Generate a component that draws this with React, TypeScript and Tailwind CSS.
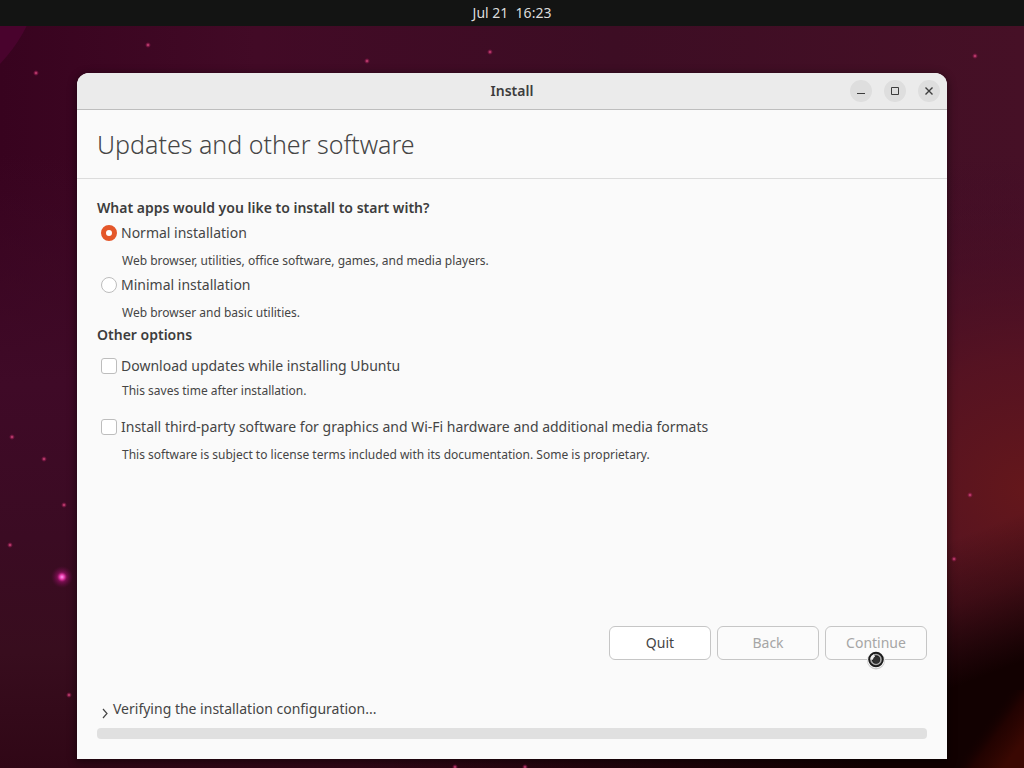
import { useState } from 'react';
import type { ReactNode } from 'react';

type IChoiceProps = {
  type: 'radio' | 'checkbox';
  id: string;
  name: string;
  label: string;
  hint: string;
  hintClassName: string;
  checked: boolean;
  onChange: () => void;
};

type IWindowButtonProps = {
  label: string;
  children: ReactNode;
};

type IActionButtonProps = {
  disabled?: boolean;
  children: string;
};

const stars = [
  { x: 36, y: 73 },
  { x: 148, y: 45 },
  { x: 367, y: 61 },
  { x: 490, y: 52 },
  { x: 975, y: 56 },
  { x: 12, y: 437 },
  { x: 44, y: 459 },
  { x: 64, y: 505 },
  { x: 10, y: 545 },
  { x: 69, y: 695 },
  { x: 970, y: 495 },
  { x: 954, y: 559 },
  { x: 455, y: 767 },
  { x: 525, y: 767 },
];

const Wallpaper = () => (
  <svg
    className="absolute inset-0 h-full w-full"
    viewBox="0 0 1024 768"
    preserveAspectRatio="xMidYMid slice"
    aria-hidden="true"
  >
    <defs>
      <linearGradient id="base" x1="0" y1="0" x2="1" y2="0">
        <stop offset="0" stopColor="#38031f" />
        <stop offset="0.25" stopColor="#420a26" />
        <stop offset="0.6" stopColor="#3d0d24" />
        <stop offset="1" stopColor="#461026" />
      </linearGradient>
      <linearGradient id="lower" x1="0" y1="0" x2="0" y2="1">
        <stop offset="0.2" stopColor="#3f0a27" stopOpacity="0" />
        <stop offset="0.5" stopColor="#3f0a27" />
        <stop offset="0.7" stopColor="#3b0b23" />
        <stop offset="0.85" stopColor="#380d1e" />
        <stop offset="1" stopColor="#300716" />
      </linearGradient>
      <radialGradient
        id="ember"
        gradientUnits="userSpaceOnUse"
        cx="1024"
        cy="490"
        r="330"
      >
        <stop offset="0" stopColor="#64171b" />
        <stop offset="0.4" stopColor="#591421" stopOpacity="0.85" />
        <stop offset="1" stopColor="#461026" stopOpacity="0" />
      </radialGradient>
      <linearGradient
        id="shade"
        gradientUnits="userSpaceOnUse"
        x1="950"
        y1="540"
        x2="1000"
        y2="670"
      >
        <stop offset="0" stopColor="#120101" stopOpacity="0" />
        <stop offset="0.45" stopColor="#120101" stopOpacity="0.35" />
        <stop offset="1" stopColor="#120101" />
      </linearGradient>
      <linearGradient id="floor" x1="0" y1="0" x2="1" y2="0">
        <stop offset="0.35" stopColor="#120101" stopOpacity="0" />
        <stop offset="0.85" stopColor="#120101" />
      </linearGradient>
      <linearGradient
        id="corner"
        gradientUnits="userSpaceOnUse"
        x1="990"
        y1="715"
        x2="1024"
        y2="740"
      >
        <stop offset="0" stopColor="#120101" stopOpacity="0" />
        <stop offset="0.4" stopColor="#260301" stopOpacity="0.8" />
        <stop offset="1" stopColor="#3a0802" />
      </linearGradient>
      <radialGradient id="star">
        <stop offset="0" stopColor="#f06a9c" />
        <stop offset="0.35" stopColor="#b82c62" stopOpacity="0.75" />
        <stop offset="1" stopColor="#8a1050" stopOpacity="0" />
      </radialGradient>
      <radialGradient id="nova">
        <stop offset="0" stopColor="#ff9af2" />
        <stop offset="0.22" stopColor="#e53aa8" />
        <stop offset="0.45" stopColor="#a0106c" stopOpacity="0.6" />
        <stop offset="1" stopColor="#6a0a48" stopOpacity="0" />
      </radialGradient>
    </defs>
    <rect width="1024" height="768" fill="url(#base)" />
    <rect width="1024" height="768" fill="url(#lower)" />
    <rect x="600" y="100" width="424" height="668" fill="url(#ember)" />
    <path d="M0 0h36Q28 34 0 64z" fill="#49032d" />
    <rect x="900" y="500" width="124" height="268" fill="url(#shade)" />
    <rect y="755" width="1024" height="13" fill="url(#floor)" />
    <rect x="960" y="690" width="64" height="78" fill="url(#corner)" />
    {stars.map((star) => (
      <circle
        key={`${star.x}-${star.y}`}
        cx={star.x}
        cy={star.y}
        r="3"
        fill="url(#star)"
      />
    ))}
    <circle cx="62" cy="577" r="11" fill="url(#nova)" />
  </svg>
);

const WindowButton = (props: IWindowButtonProps) => (
  <button
    type="button"
    aria-label={props.label}
    className="flex h-[22px] w-[22px] items-center justify-center rounded-full bg-[#dedede]"
  >
    <svg
      className="h-4 w-4"
      viewBox="0 0 16 16"
      fill="none"
      stroke="#3d3d3d"
      aria-hidden="true"
    >
      {props.children}
    </svg>
  </button>
);

const Choice = (props: IChoiceProps) => (
  <div>
    <div className="flex h-5 items-center gap-1 pl-1">
      <input
        type={props.type}
        id={props.id}
        name={props.name}
        checked={props.checked}
        onChange={props.onChange}
        aria-describedby={`${props.id}-hint`}
        className={
          props.type === 'radio'
            ? 'h-4 w-4 shrink-0 appearance-none rounded-full border border-[#bdbdbd] bg-white checked:border-[5px] checked:border-[#e4572a]'
            : 'h-4 w-4 shrink-0 appearance-none rounded-[3px] border border-[#bdbdbd] bg-white checked:border-[#e4572a] checked:bg-[#e4572a]'
        }
      />
      <label htmlFor={props.id} className="text-sm leading-5">
        {props.label}
      </label>
    </div>
    <p
      id={`${props.id}-hint`}
      className={`${props.hintClassName} pl-[25px] text-xs leading-5`}
    >
      {props.hint}
    </p>
  </div>
);

const ActionButton = (props: IActionButtonProps) => (
  <button
    type="button"
    disabled={props.disabled}
    className="h-[34px] w-[102px] rounded-md border border-[#c6c6c6] bg-white text-sm disabled:bg-[#fbfbfb] disabled:text-[#a6a6a6]"
  >
    {props.children}
  </button>
);

const BusyCursor = () => (
  <svg
    className="pointer-events-none absolute top-6 left-[41px] h-5 w-5"
    viewBox="0 0 20 20"
    aria-hidden="true"
  >
    <circle cx="10" cy="10.5" r="9" fill="#b9b9b9" opacity="0.7" />
    <circle cx="10" cy="9.5" r="8.6" fill="#fff" />
    <circle cx="10" cy="9.5" r="7.8" fill="#1c1c1c" />
    <circle cx="10" cy="9.5" r="5" fill="none" stroke="#a8a8a8" strokeWidth="1.6" />
    <path d="M4.4 9.5a5.6 5.6 0 0 1 3.4-5.2l1.4 2.6-2.4 2.8z" fill="#efefef" />
    <circle cx="10.5" cy="9.8" r="3.4" fill="#303030" />
  </svg>
);

const App = () => {
  const [mode, setMode] = useState('normal');
  const [updates, setUpdates] = useState(false);
  const [thirdParty, setThirdParty] = useState(false);
  const [expanded, setExpanded] = useState(false);

  return (
    <div className="relative flex min-h-screen flex-col overflow-hidden bg-[#3a0c23] font-['Noto_Sans','Open_Sans',sans-serif] text-[#454545]">
      <Wallpaper />

      <header className="relative flex h-[26px] items-center justify-center bg-[#131413] text-sm leading-5 text-[#dcdcdc]">
        <time className="whitespace-pre">{'Jul 21  16:23'}</time>
      </header>

      <main className="relative flex flex-1 flex-col px-[77px] pt-[47px] pb-[9px]">
        <section className="flex flex-1 flex-col rounded-t-xl bg-[#fafafa] shadow-[0_2px_8px_1px_rgba(0,0,0,0.45)]">
          <div className="grid h-[37px] grid-cols-[1fr_auto_1fr] items-center rounded-t-xl border-b border-[#bebebe] bg-[#ebebeb] px-[7px]">
            <h1 className="col-start-2 text-sm leading-5 font-semibold text-[#3d3d3d]">
              Install
            </h1>
            <div className="flex justify-end gap-3">
              <WindowButton label="Minimize">
                <path d="M4 10.5h8" />
              </WindowButton>
              <WindowButton label="Maximize">
                <path d="M4.5 4.5h7v7h-7z" />
              </WindowButton>
              <WindowButton label="Close">
                <path d="M4.5 4.5l7 7m0-7l-7 7" strokeWidth="1.4" />
              </WindowButton>
            </div>
          </div>

          <div className="border-b border-[#dcdcdc] px-5 py-[18px]">
            <h2 className="text-[25px] leading-8 font-light">
              Updates and other software
            </h2>
          </div>

          <form className="flex flex-1 flex-col px-5 pt-[19px] pb-5">
            <fieldset>
              <legend className="text-sm leading-5 font-semibold text-[#3d3d3d]">
                What apps would you like to install to start with?
              </legend>
              <div className="flex flex-col gap-1 pt-[5px]">
                <Choice
                  type="radio"
                  id="normal"
                  name="mode"
                  label="Normal installation"
                  hint="Web browser, utilities, office software, games, and media players."
                  hintClassName="mt-2"
                  checked={mode === 'normal'}
                  onChange={() => setMode('normal')}
                />
                <Choice
                  type="radio"
                  id="minimal"
                  name="mode"
                  label="Minimal installation"
                  hint="Web browser and basic utilities."
                  hintClassName="mt-2"
                  checked={mode === 'minimal'}
                  onChange={() => setMode('minimal')}
                />
              </div>
            </fieldset>

            <fieldset className="mt-0.5">
              <legend className="text-sm leading-5 font-semibold text-[#3d3d3d]">
                Other options
              </legend>
              <div className="flex flex-col gap-4 pt-[11px]">
                <Choice
                  type="checkbox"
                  id="updates"
                  name="updates"
                  label="Download updates while installing Ubuntu"
                  hint="This saves time after installation."
                  hintClassName="mt-[5px]"
                  checked={updates}
                  onChange={() => setUpdates(!updates)}
                />
                <Choice
                  type="checkbox"
                  id="third-party"
                  name="third-party"
                  label="Install third-party software for graphics and Wi-Fi hardware and additional media formats"
                  hint="This software is subject to license terms included with its documentation. Some is proprietary."
                  hintClassName="mt-2"
                  checked={thirdParty}
                  onChange={() => setThirdParty(!thirdParty)}
                />
              </div>
            </fieldset>

            <div className="mt-auto flex justify-end gap-1.5">
              <ActionButton>Quit</ActionButton>
              <ActionButton disabled>Back</ActionButton>
              <div className="relative">
                <ActionButton disabled>Continue</ActionButton>
                <BusyCursor />
              </div>
            </div>

            <button
              type="button"
              aria-expanded={expanded}
              onClick={() => setExpanded(!expanded)}
              className="mt-[39px] flex items-end gap-1 self-start pl-1 text-sm leading-5"
            >
              <svg
                className="h-3 w-2"
                viewBox="0 0 8 12"
                fill="none"
                stroke="#454545"
                strokeWidth="1.2"
                aria-hidden="true"
              >
                <path d="M2 2l4 4.5-4 4.5" />
              </svg>
              Verifying the installation configuration...
            </button>
            <div
              role="progressbar"
              aria-label="Verifying the installation configuration..."
              aria-valuemin={0}
              aria-valuemax={100}
              aria-valuenow={0}
              className="mt-[9px] h-[11px] rounded-sm bg-[#e0e0e0]"
            />
          </form>
        </section>
      </main>
    </div>
  );
};

export default App;
